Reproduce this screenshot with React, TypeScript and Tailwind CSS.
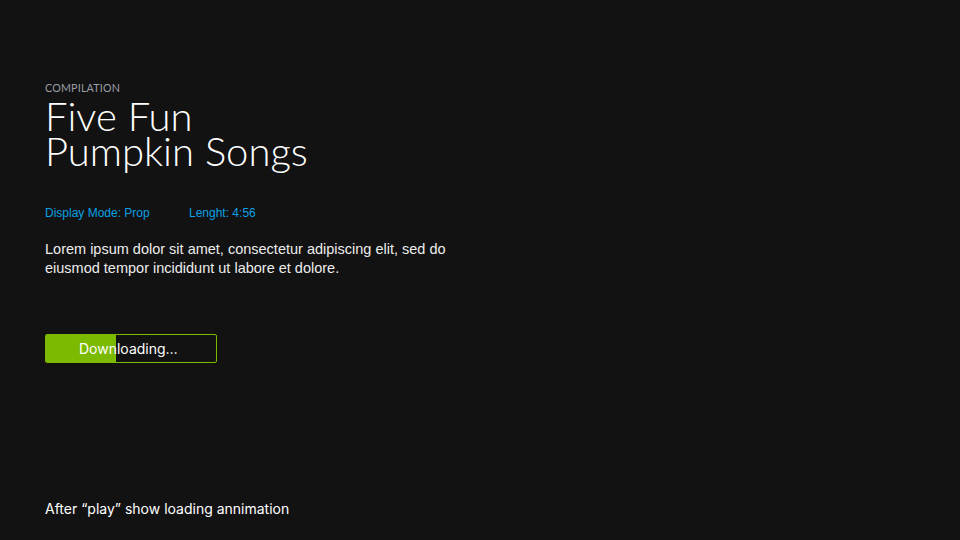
export default function App() {
  return (
    <div className="w-[960px] h-[540px] bg-[#121212] relative overflow-hidden">
      <div className="pl-[45px] pt-[82px] flex flex-col">
        <div className="text-[10.7px] leading-[12px] text-[#9a9ea6] font-['Lato',sans-serif] tracking-[0.2px]">
          COMPILATION
        </div>
        <h1 className="mt-[5px] text-[40px] leading-[35px] font-light text-white font-['Lato',sans-serif]">
          Five Fun
          <br />
          Pumpkin Songs
        </h1>
        <div className="mt-[37px] flex text-[12px] leading-[14px] text-[#0ba0e4] font-['Liberation_Sans',sans-serif]">
          <span className="w-[144px]">Display Mode: Prop</span>
          <span>Lenght: 4:56</span>
        </div>
        <p className="mt-[20px] w-[420px] text-[14.5px] leading-[19px] text-[#ececec] font-['Liberation_Sans',sans-serif]">
          Lorem ipsum dolor sit amet, consectetur adipiscing elit, sed do eiusmod tempor incididunt ut labore et dolore.
        </p>
        <div className="mt-[56px] relative w-[172px] h-[29px] rounded-[2px] border border-[#7cba00] overflow-hidden">
          <div className="absolute left-0 top-0 bottom-0 w-[70px] bg-[#7cba00]" />
          <div className="relative pl-[33px] text-[14px] leading-[27px] text-white font-['Inter',sans-serif]">
            Downloading…
          </div>
        </div>
      </div>
      <div className="absolute left-[45px] top-[499px] text-[14px] leading-[20px] text-white font-['Inter',sans-serif]">
        After “play” show loading annimation
      </div>
    </div>
  );
}
